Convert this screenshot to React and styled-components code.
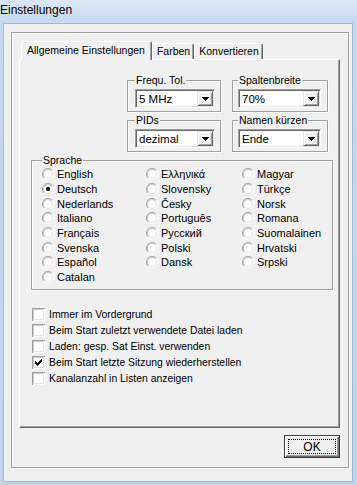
import React from "react";
import styled, { createGlobalStyle } from "styled-components";

const Global = createGlobalStyle`
  html, body { margin: 0; padding: 0; background: #c6d9ef; }
  body {
    font-family: "Liberation Sans", Arial, sans-serif;
    font-size: 10.5px;
    color: #000;
  }
`;

const Window = styled.div`
  width: 357px;
  height: 485px;
  box-sizing: border-box;
  display: flex;
  flex-direction: column;
  background: linear-gradient(#dce7f5, #c7d9ee 22px, #bfd3eb);
  padding: 0 4px 3px 3px;
`;

const TitleBar = styled.div`
  height: 23px;
  margin-left: -3px;
  font-size: 12px;
  line-height: 20px;
  color: #000;
`;

const Client = styled.div`
  flex: 1;
  display: flex;
  flex-direction: column;
  background: #f0f0f0;
  border: 1px solid #a3b7cf;
  padding: 8px 3px 13px 7px;
`;

const Etched = styled.div`
  flex: 1;
  display: flex;
  flex-direction: column;
  border: 1px solid #a0a0a0;
  box-shadow: inset 1px 1px 0 #fff, 1px 1px 0 #fff;
  padding: 8px 8px 9px 7px;
`;

const TabStrip = styled.div`
  display: flex;
  align-items: flex-end;
  height: 18px;
  padding-left: 2px;
`;

const Tab = styled.div`
  position: relative;
  box-sizing: border-box;
  height: ${(p) => (p.$active ? "19px" : "16px")};
  margin-bottom: ${(p) => (p.$active ? "-1px" : "0")};
  z-index: ${(p) => (p.$active ? 2 : 1)};
  padding: ${(p) => (p.$active ? "2px 6px 0 5px" : "1px 3px 0 4px")};
  background: #f0f0f0;
  border-top: 1px solid #fff;
  border-left: 1px solid #fff;
  border-right: 1px solid #696969;
  border-radius: 2px 2px 0 0;
  box-shadow: inset -1px 0 0 #a0a0a0;
  line-height: 13px;
  white-space: nowrap;
`;

const Page = styled.div`
  flex: 1;
  display: flex;
  flex-direction: column;
  border-top: 1px solid #fff;
  border-left: 1px solid #fff;
  border-right: 1px solid #696969;
  border-bottom: 1px solid #696969;
  box-shadow: inset -1px -1px 0 #a0a0a0;
  padding: 14px 6px 0 11px;
`;

const ComboGrid = styled.div`
  display: grid;
  grid-template-columns: 94px 96px;
  column-gap: 11px;
  row-gap: 2px;
  margin-left: 96px;
`;

const Group = styled.fieldset`
  margin: 0;
  min-width: 0;
  border: 1px solid #a0a0a0;
  box-shadow: inset 1px 1px 0 #fff, 1px 1px 0 #fff;
  padding: ${(p) => p.$pad || "3px 5px 3px 7px"};
`;

const Legend = styled.legend`
  padding: 0 1px;
  line-height: 12px;
  background: #f0f0f0;
`;

const Combo = styled.div`
  box-sizing: border-box;
  height: 19px;
  display: flex;
  align-items: center;
  justify-content: space-between;
  background: #fff;
  border-style: solid;
  border-width: 1px;
  border-color: #a0a0a0 #fff #fff #a0a0a0;
  box-shadow: inset 1px 1px 0 #696969, inset -1px -1px 0 #e3e3e3;
  padding: 1px 1px 1px 3px;
  font-size: 11.5px;
`;

const DropButton = styled.div`
  box-sizing: border-box;
  width: 16px;
  height: 15px;
  display: flex;
  align-items: center;
  justify-content: center;
  background: #f0f0f0;
  border-style: solid;
  border-width: 1px;
  border-color: #e3e3e3 #696969 #696969 #e3e3e3;
  box-shadow: inset 1px 1px 0 #fff, inset -1px -1px 0 #a0a0a0;
`;

const LangGroup = styled(Group)`
  margin-top: 2px;
  width: 302px;
  box-sizing: border-box;
`;

const LangColumns = styled.div`
  display: grid;
  grid-template-columns: 104px 96px 1fr;
`;

const LangColumn = styled.div`
  display: flex;
  flex-direction: column;
`;

const Option = styled.div`
  display: flex;
  align-items: center;
  gap: ${(p) => p.$gap || "3px"};
  height: ${(p) => p.$h || "14.7px"};
  white-space: nowrap;
  font-size: ${(p) => p.$size || "11px"};
`;

const CheckList = styled.div`
  display: flex;
  flex-direction: column;
  margin-top: 17px;
  padding-left: 1px;
`;

const Footer = styled.div`
  display: flex;
  justify-content: flex-end;
  margin-top: 7px;
`;

const Button = styled.div`
  box-sizing: border-box;
  width: 56px;
  height: 23px;
  padding: 3px;
  background: #f0f0f0;
  border: 1px solid #3c3c3c;
  box-shadow: inset 1px 1px 0 #fff, inset -1px -1px 0 #696969, inset -2px -2px 0 #a0a0a0;
`;

const Focus = styled.div`
  height: 100%;
  box-sizing: border-box;
  border: 1px dotted #000;
  display: flex;
  align-items: center;
  justify-content: center;
  font-size: 12px;
`;

const Arrow = () => (
  <svg width="7" height="4" viewBox="0 0 7 4" shapeRendering="crispEdges">
    <rect x="0" y="0" width="7" height="1" fill="#000" />
    <rect x="1" y="1" width="5" height="1" fill="#000" />
    <rect x="2" y="2" width="3" height="1" fill="#000" />
    <rect x="3" y="3" width="1" height="1" fill="#000" />
  </svg>
);

const Radio = ({ checked }) => (
  <svg width="12" height="12" viewBox="0 0 12 12">
    <circle cx="6" cy="6" r="5" fill="#fff" />
    <path d="M2.1 9.9 A5.5 5.5 0 0 1 9.9 2.1" fill="none" stroke="#a0a0a0" />
    <path d="M9.9 2.1 A5.5 5.5 0 0 1 2.1 9.9" fill="none" stroke="#ffffff" />
    <path d="M2.8 9.2 A4.5 4.5 0 0 1 9.2 2.8" fill="none" stroke="#c8c8c8" />
    <path d="M9.2 2.8 A4.5 4.5 0 0 1 2.8 9.2" fill="none" stroke="#e3e3e3" />
    {checked && <circle cx="6" cy="6" r="2" fill="#000" />}
  </svg>
);

const checkCols = [[3, 5], [4, 6], [5, 7], [6, 6], [7, 5], [8, 4], [9, 3]];

const Check = ({ checked }) => (
  <svg width="13" height="13" viewBox="0 0 13 13" shapeRendering="crispEdges">
    <rect x="0" y="0" width="13" height="13" fill="#fff" />
    <rect x="0" y="0" width="13" height="1" fill="#a0a0a0" />
    <rect x="0" y="0" width="1" height="13" fill="#a0a0a0" />
    <rect x="1" y="1" width="11" height="1" fill="#c8c8c8" />
    <rect x="1" y="1" width="1" height="11" fill="#c8c8c8" />
    <rect x="1" y="11" width="11" height="1" fill="#e3e3e3" />
    <rect x="11" y="1" width="1" height="11" fill="#e3e3e3" />
    {checked &&
      checkCols.map(([x, y]) => (
        <rect key={x} x={x} y={y} width="1" height="3" fill="#000" />
      ))}
  </svg>
);

const combos = [
  { label: "Frequ. Tol.", value: "5 MHz", pad: "3px 5px 3px 7px" },
  { label: "Spaltenbreite", value: "70%", pad: "3px 6px 3px 5px" },
  { label: "PIDs", value: "dezimal", pad: "3px 5px 3px 7px" },
  { label: "Namen kürzen", value: "Ende", pad: "3px 6px 3px 5px" },
];

const languages = [
  ["English", "Deutsch", "Nederlands", "Italiano", "Français", "Svenska", "Español", "Catalan"],
  ["Ελληνικά", "Slovensky", "Česky", "Português", "Русский", "Polski", "Dansk"],
  ["Magyar", "Türkçe", "Norsk", "Romana", "Suomalainen", "Hrvatski", "Srpski"],
];

const options = [
  { text: "Immer im Vordergrund", checked: false },
  { text: "Beim Start zuletzt verwendete Datei laden", checked: false },
  { text: "Laden: gesp. Sat Einst. verwenden", checked: false },
  { text: "Beim Start letzte Sitzung wiederherstellen", checked: true },
  { text: "Kanalanzahl in Listen anzeigen", checked: false },
];

export default function App() {
  return (
    <>
      <Global />
      <Window>
        <TitleBar>Einstellungen</TitleBar>
        <Client>
          <Etched>
            <TabStrip>
              <Tab $active>Allgemeine Einstellungen</Tab>
              <Tab>Farben</Tab>
              <Tab>Konvertieren</Tab>
            </TabStrip>
            <Page>
              <ComboGrid>
                {combos.map((c) => (
                  <Group key={c.label} $pad={c.pad}>
                    <Legend>{c.label}</Legend>
                    <Combo>
                      <span>{c.value}</span>
                      <DropButton>
                        <Arrow />
                      </DropButton>
                    </Combo>
                  </Group>
                ))}
              </ComboGrid>
              <LangGroup $pad="1px 0 4px 10px">
                <Legend>Sprache</Legend>
                <LangColumns>
                  {languages.map((col, i) => (
                    <LangColumn key={i}>
                      {col.map((lang) => (
                        <Option key={lang}>
                          <Radio checked={lang === "Deutsch"} />
                          <span>{lang}</span>
                        </Option>
                      ))}
                    </LangColumn>
                  ))}
                </LangColumns>
              </LangGroup>
              <CheckList>
                {options.map((o) => (
                  <Option key={o.text} $gap="4px" $h="16px" $size="10.4px">
                    <Check checked={o.checked} />
                    <span>{o.text}</span>
                  </Option>
                ))}
              </CheckList>
            </Page>
            <Footer>
              <Button>
                <Focus>OK</Focus>
              </Button>
            </Footer>
          </Etched>
        </Client>
      </Window>
    </>
  );
}
